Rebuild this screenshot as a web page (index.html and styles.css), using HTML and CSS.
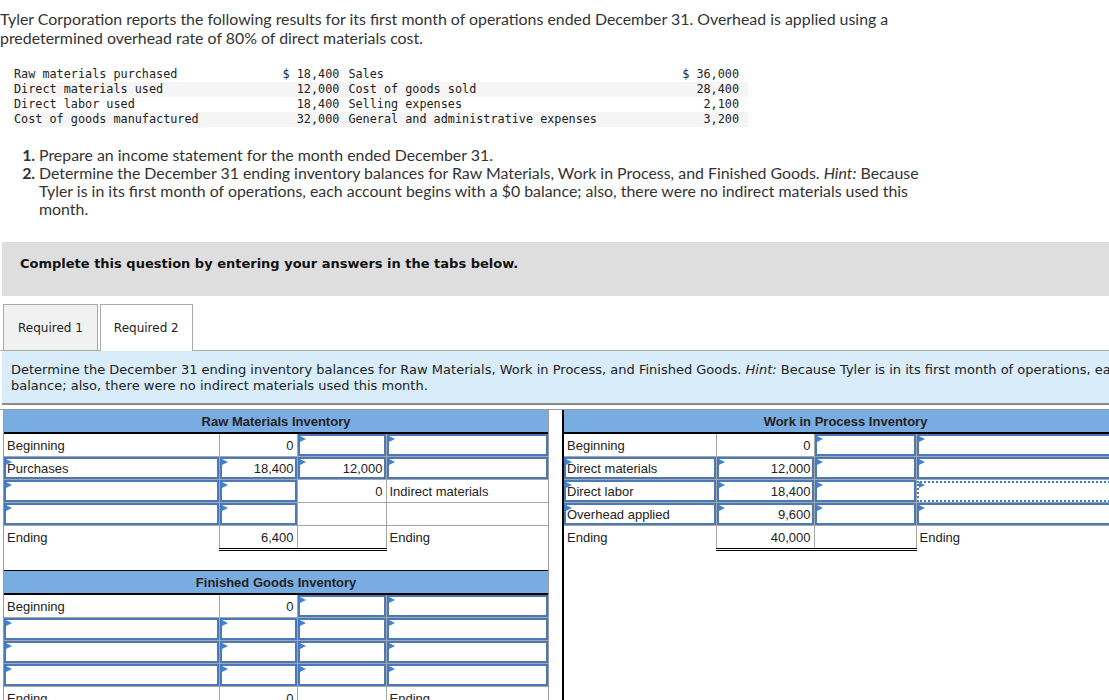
FILE: index.html
```html
<!DOCTYPE html>
<html lang="en">
<head>
    <meta charset="UTF-8">
    <meta name="viewport" content="width=device-width, initial-scale=1.0">
    <title>Tyler Corporation - Inventory Balances</title>
    <link rel="stylesheet" href="styles.css">
</head>
<body>
    <div class="question">
        <p class="intro">Tyler Corporation reports the following results for its first month of operations ended December 31. Overhead is applied using a predetermined overhead rate of 80% of direct materials cost.</p>

        <table class="data">
            <tr>
                <td class="label">Raw materials purchased</td>
                <td class="num">$ 18,400</td>
                <td class="desc">Sales</td>
                <td class="num end">$ 36,000</td>
            </tr>
            <tr class="stripe">
                <td class="label">Direct materials used</td>
                <td class="num">12,000</td>
                <td class="desc">Cost of goods sold</td>
                <td class="num end">28,400</td>
            </tr>
            <tr>
                <td class="label">Direct labor used</td>
                <td class="num">18,400</td>
                <td class="desc">Selling expenses</td>
                <td class="num end">2,100</td>
            </tr>
            <tr class="stripe">
                <td class="label">Cost of goods manufactured</td>
                <td class="num">32,000</td>
                <td class="desc">General and administrative expenses</td>
                <td class="num end">3,200</td>
            </tr>
        </table>

        <ol class="tasks">
            <li>Prepare an income statement for the month ended December 31.</li>
            <li>Determine the December 31 ending inventory balances for Raw Materials, Work in Process, and Finished Goods. <em>Hint:</em> Because Tyler is in its first month of operations, each account begins with a $0 balance; also, there were no indirect materials used this month.</li>
        </ol>
    </div>

    <div class="band">Complete this question by entering your answers in the tabs below.</div>

    <div class="tabs">
        <div class="tab">Required 1</div>
        <div class="tab active">Required 2</div>
    </div>

    <div class="instructions">
        <p>Determine the December 31 ending inventory balances for Raw Materials, Work in Process, and Finished Goods. <em>Hint:</em> Because Tyler is in its first month of operations, each account begins with a $0<br>balance; also, there were no indirect materials used this month.</p>
    </div>

    <div class="accounts">
        <div class="panel panel-left">
            <table class="taccount">
                <colgroup>
                    <col class="c1"><col class="c2"><col class="c3"><col class="c4">
                </colgroup>
                <tr><th colspan="4">Raw Materials Inventory</th></tr>
                <tr>
                    <td>Beginning</td>
                    <td class="num">0</td>
                    <td class="in"></td>
                    <td class="in"></td>
                </tr>
                <tr>
                    <td class="in">Purchases</td>
                    <td class="in num">18,400</td>
                    <td class="in num">12,000</td>
                    <td class="in"></td>
                </tr>
                <tr>
                    <td class="in"></td>
                    <td class="in"></td>
                    <td class="num">0</td>
                    <td>Indirect materials</td>
                </tr>
                <tr>
                    <td class="in"></td>
                    <td class="in"></td>
                    <td></td>
                    <td></td>
                </tr>
                <tr class="ending">
                    <td>Ending</td>
                    <td class="num total">6,400</td>
                    <td class="total"></td>
                    <td>Ending</td>
                </tr>
            </table>

            <table class="taccount fg">
                <colgroup>
                    <col class="c1"><col class="c2"><col class="c3"><col class="c4">
                </colgroup>
                <tr><th colspan="4">Finished Goods Inventory</th></tr>
                <tr>
                    <td>Beginning</td>
                    <td class="num">0</td>
                    <td class="in"></td>
                    <td class="in"></td>
                </tr>
                <tr>
                    <td class="in"></td>
                    <td class="in"></td>
                    <td class="in"></td>
                    <td class="in"></td>
                </tr>
                <tr>
                    <td class="in"></td>
                    <td class="in"></td>
                    <td class="in"></td>
                    <td class="in"></td>
                </tr>
                <tr>
                    <td class="in"></td>
                    <td class="in"></td>
                    <td class="in"></td>
                    <td class="in"></td>
                </tr>
                <tr class="ending">
                    <td>Ending</td>
                    <td class="num total">0</td>
                    <td class="total"></td>
                    <td>Ending</td>
                </tr>
            </table>
        </div>

        <div class="panel panel-right">
            <table class="taccount wip">
                <colgroup>
                    <col class="c1"><col class="c2"><col class="c3"><col class="c4">
                </colgroup>
                <tr><th colspan="4">Work in Process Inventory</th></tr>
                <tr>
                    <td>Beginning</td>
                    <td class="num">0</td>
                    <td class="in"></td>
                    <td class="in"></td>
                </tr>
                <tr>
                    <td class="in">Direct materials</td>
                    <td class="in num">12,000</td>
                    <td class="in"></td>
                    <td class="in"></td>
                </tr>
                <tr>
                    <td class="in">Direct labor</td>
                    <td class="in num">18,400</td>
                    <td class="in"></td>
                    <td class="in focus"></td>
                </tr>
                <tr>
                    <td class="in">Overhead applied</td>
                    <td class="in num">9,600</td>
                    <td class="in"></td>
                    <td class="in"></td>
                </tr>
                <tr class="ending">
                    <td>Ending</td>
                    <td class="num total">40,000</td>
                    <td class="total"></td>
                    <td>Ending</td>
                </tr>
            </table>
        </div>
    </div>
</body>
</html>
```

FILE: styles.css
```css
html {
    overflow: hidden;
}

body {
    margin: 0;
    width: 1130px;
    font-family: Lato, "Open Sans", sans-serif;
    color: #333;
}

.question {
    width: 935px;
    padding-top: 9px;
}

.intro {
    margin: 0;
    font-size: 15.9px;
    line-height: 19px;
}

.data {
    margin: 20px 0 0 13px;
    width: 735px;
    border-collapse: collapse;
    font-family: "DejaVu Sans Mono", monospace;
    font-size: 11.8px;
    color: #222;
}

.data td {
    height: 15px;
    padding: 0;
    line-height: 15px;
    white-space: nowrap;
}

.data .stripe td {
    background: #f5f5f5;
}

.data .label {
    width: 261px;
    padding-left: 1px;
}

.data .num {
    text-align: right;
}

.data .desc {
    padding-left: 9px;
    width: 325px;
}

.data .end {
    padding-right: 9px;
}

.tasks {
    margin: 19px 0 0;
    padding-left: 39px;
    font-size: 15.9px;
    line-height: 18px;
}

.tasks li::marker {
    font-weight: bold;
}

.band {
    margin: 24px 0 0 2px;
    padding: 14px 18px 24px;
    background: #dedede;
    font-family: "DejaVu Sans", Verdana, sans-serif;
    font-size: 13px;
    font-weight: bold;
    line-height: 16px;
    color: #111;
}

.tabs {
    display: flex;
    margin-top: 8px;
    padding-left: 3px;
    border-bottom: 1px solid #aaa;
}

.tab {
    height: 45px;
    padding: 0 14px;
    display: flex;
    align-items: center;
    border: 1px solid #aaa;
    border-bottom: none;
    margin-right: 2px;
    margin-bottom: -1px;
    background: #f1f1f1;
    font-family: "DejaVu Sans", Verdana, sans-serif;
    font-size: 12px;
    color: #222;
}

.tab.active {
    background: #fff;
    height: 46px;
    padding: 0 13px;
}

.instructions {
    margin-left: 2px;
    padding: 11px 9px 9px;
    background: #d9ecf9;
    border-bottom: 2px solid #8c8c8c;
    font-family: "DejaVu Sans", Verdana, sans-serif;
    font-size: 13px;
    line-height: 16px;
    color: #222;
    white-space: nowrap;
}

.instructions p {
    margin: 0;
}

.accounts {
    display: flex;
    margin-top: 4px;
    border-top: 1px solid #999;
    height: 300px;
}

.panel-left {
    width: 544px;
    margin-left: 3px;
    border-left: 1px solid #999;
    border-right: 1px solid #999;
}

.panel-right {
    width: 563px;
    margin-left: 13px;
    border-left: 2px solid #000;
}

.taccount {
    width: 100%;
    table-layout: fixed;
    border-collapse: collapse;
    font-family: "Liberation Sans", Arial, sans-serif;
    font-size: 13px;
    color: #222;
}

.panel-left .c1 { width: 215px; }
.panel-left .c2 { width: 78px; }
.panel-left .c3 { width: 89px; }
.panel-left .c4 { width: 162px; }

.wip .c1 { width: 152px; }
.wip .c2 { width: 98px; }
.wip .c3 { width: 102px; }
.wip .c4 { width: 211px; }

.taccount th {
    height: 22px;
    padding: 0;
    background: #79ade2;
    border-bottom: 2px solid #000;
    font-weight: bold;
    text-align: center;
}

.taccount td {
    height: 22px;
    padding: 0 3px;
    border: 1px solid #a6a6a6;
    white-space: nowrap;
}

.taccount td:first-child {
    border-left: none;
}

.taccount td:last-child {
    border-right: none;
}

.taccount .num {
    text-align: right;
}

.taccount .in {
    position: relative;
    box-shadow: inset 0 0 0 2px #4a78b8;
}

.taccount .in::before {
    content: "";
    position: absolute;
    left: 2px;
    top: 2px;
    border-left: 6px solid #3d83d9;
    border-top: 3px solid transparent;
    border-bottom: 3px solid transparent;
}

.taccount .focus {
    box-shadow: none;
    outline: 2px dotted #3d7cc9;
    outline-offset: -3px;
}

.taccount .ending td {
    border-bottom: none;
}

.taccount .ending .total {
    border-top: 1px solid #333;
    border-bottom: 3px double #000;
}

.fg {
    margin-top: 19px;
}

.fg th {
    border-top: 1px solid #000;
}
```
